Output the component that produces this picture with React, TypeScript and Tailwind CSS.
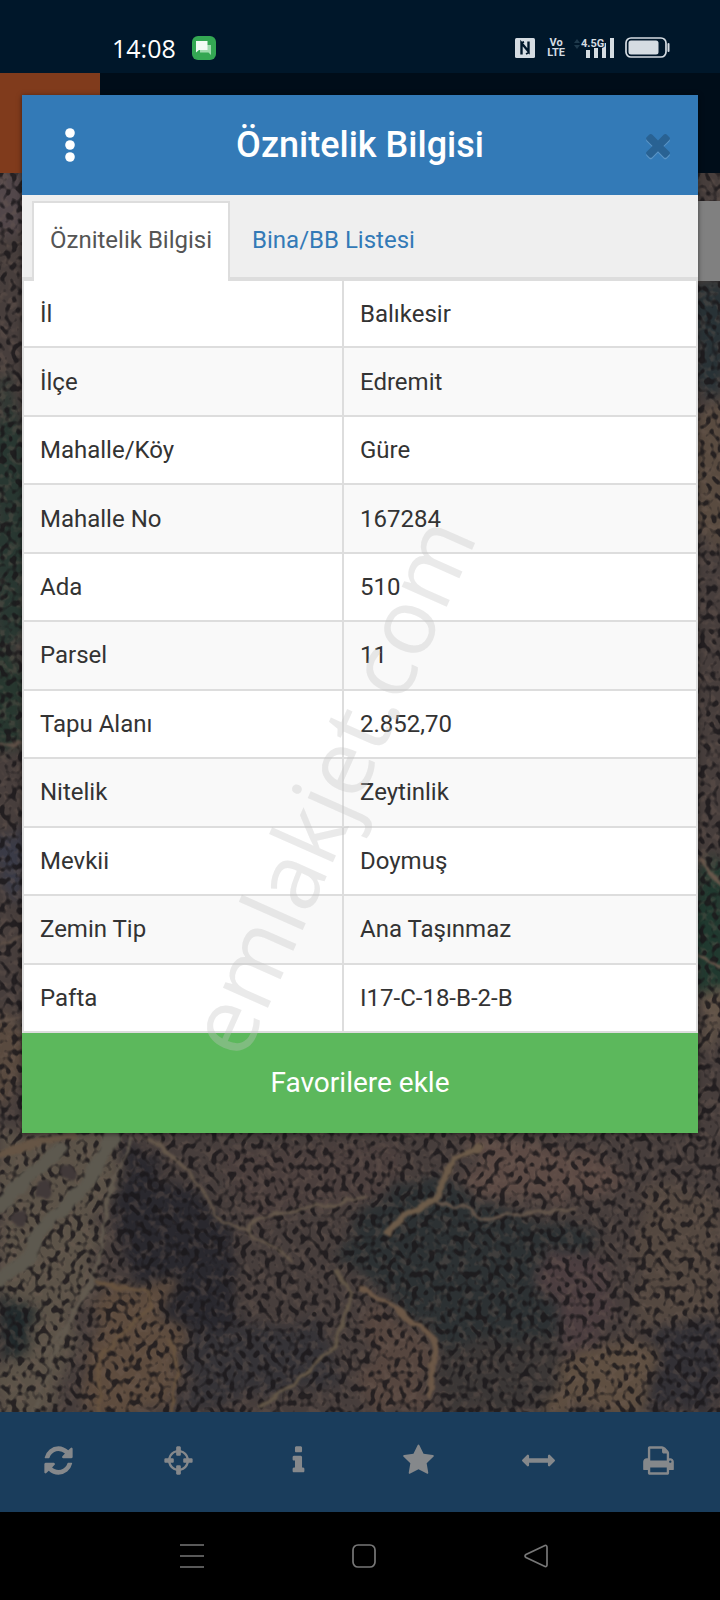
import type { ReactNode } from 'react';

const ROWS = [
  { label: 'İl', value: 'Balıkesir' },
  { label: 'İlçe', value: 'Edremit' },
  { label: 'Mahalle/Köy', value: 'Güre' },
  { label: 'Mahalle No', value: '167284' },
  { label: 'Ada', value: '510' },
  { label: 'Parsel', value: '11' },
  { label: 'Tapu Alanı', value: '2.852,70' },
  { label: 'Nitelik', value: 'Zeytinlik' },
  { label: 'Mevkii', value: 'Doymuş' },
  { label: 'Zemin Tip', value: 'Ana Taşınmaz' },
  { label: 'Pafta', value: 'I17-C-18-B-2-B' },
];

const TOOLS = [
  {
    label: 'Yenile',
    d: 'M1639 1056q0 5-1 7-64 268-268 434.5t-478 166.5q-146 0-282.5-55t-243.5-157l-129 129q-19 19-45 19t-45-19-19-45v-448q0-26 19-45t45-19h448q26 0 45 19t19 45-19 45l-137 137q71 66 161 102t187 36q134 0 250-65t186-179q11-17 53-117 8-23 30-23h192q13 0 22.5 9.5t9.5 22.5zm25-800v448q0 26-19 45t-45 19h-448q-26 0-45-19t-19-45 19-45l138-138q-148-137-349-137-134 0-250 65t-186 179q-11 17-53 117-8 23-30 23h-199q-13 0-22.5-9.5t-9.5-22.5v-7q65-268 270-434.5t480-166.5q146 0 284 55.5t245 156.5l130-129q19-19 45-19t45 19 19 45z',
  },
  {
    label: 'Konum',
    d: 'M1325 1024h-109q-26 0-45-19t-19-45v-128q0-26 19-45t45-19h109q-32-108-112.5-188.5t-188.5-112.5v109q0 26-19 45t-45 19h-128q-26 0-45-19t-19-45v-109q-108 32-188.5 112.5t-112.5 188.5h109q26 0 45 19t19 45v128q0 26-19 45t-45 19h-109q32 108 112.5 188.5t188.5 112.5v-109q0-26 19-45t45-19h128q26 0 45 19t19 45v109q108-32 188.5-112.5t112.5-188.5zm339-192v128q0 26-19 45t-45 19h-143q-37 161-154.5 278.5t-278.5 154.5v143q0 26-19 45t-45 19h-128q-26 0-45-19t-19-45v-143q-161-37-278.5-154.5t-154.5-278.5h-143q-26 0-45-19t-19-45v-128q0-26 19-45t45-19h143q37-161 154.5-278.5t278.5-154.5v-143q0-26 19-45t45-19h128q26 0 45 19t19 45v143q161 37 278.5 154.5t154.5 278.5h143q26 0 45 19t19 45z',
  },
  {
    label: 'Bilgi',
    d: 'M1216 1344v128q0 26-19 45t-45 19h-512q-26 0-45-19t-19-45v-128q0-26 19-45t45-19h64v-384h-64q-26 0-45-19t-19-45v-128q0-26 19-45t45-19h384q26 0 45 19t19 45v576h64q26 0 45 19t19 45zm-128-1152v192q0 26-19 45t-45 19h-256q-26 0-45-19t-19-45v-192q0-26 19-45t45-19h256q26 0 45 19t19 45z',
  },
  {
    label: 'Favoriler',
    d: 'M1728 647q0 22-26 48l-363 354 86 500q1 7 1 20 0 21-10.5 35.5t-30.5 14.5q-19 0-40-12l-449-236-449 236q-22 12-40 12-21 0-31.5-14.5t-10.5-35.5q0-6 2-20l86-500-364-354q-25-27-25-48 0-37 56-46l502-73 225-455q19-41 49-41t49 41l225 455 502 73q56 9 56 46z',
  },
  {
    label: 'Ölçüm',
    d: 'M1792 896q0 26-19 45l-256 256q-19 19-45 19t-45-19-19-45v-128h-1024v128q0 26-19 45t-45 19-45-19l-256-256q-19-19-19-45t19-45l256-256q19-19 45-19t45 19 19 45v128h1024v-128q0-26 19-45t45-19 45 19l256 256q19 19 19 45z',
  },
  {
    label: 'Yazdır',
    d: 'M448 1536h896v-256h-896v256zm0-640h896v-384h-160q-40 0-68-28t-28-68v-160h-640v640zm1152 64q0-26-19-45t-45-19-45 19-19 45 19 45 45 19 45-19 19-45zm128 0v416q0 13-9.5 22.5t-22.5 9.5h-224v160q0 40-28 68t-68 28h-960q-40 0-68-28t-28-68v-160h-224q-13 0-22.5-9.5t-9.5-22.5v-416q0-79 56.5-135.5t135.5-56.5h64v-544q0-40 28-68t68-28h672q40 0 88 20t76 48l152 152q28 28 48 76t20 88v256h64q79 0 135.5 56.5t56.5 135.5z',
  },
];

function StatusBar() {
  return (
    <div className="flex h-[73px] items-center justify-between bg-[#00172a] pl-[112px] pr-[50px] pt-[22px]">
      <div className="flex items-center gap-4">
        <span className="font-['Open_Sans','Noto_Sans',sans-serif] text-[25px] leading-7 font-medium text-white">14:08</span>
        <svg width="24" height="24" viewBox="0 0 24 24">
          <rect width="24" height="24" rx="6" fill="#34a853" />
          <path d="M8 9h11v10l-2.500-2.500H8z" fill="#9fdcaf" />
          <path d="M4 5h11.500v9H7l-3 2.500z" fill="#f2fbf4" />
        </svg>
      </div>
      <div className="flex items-center">
        <svg width="20" height="20" viewBox="0 0 20 20" className="mr-3">
          <rect width="20" height="20" rx="1.500" fill="#d5dce2" />
          <path d="M6.500 20V5l7 8.500V0" fill="none" stroke="#00172a" strokeWidth="2.400" />
          <path d="M6 16.500v3.500M14 0v3.500" stroke="#d5dce2" strokeWidth="4" />
          <path d="M6 5L9 3.800M14 14.500L11 16" stroke="#00172a" strokeWidth="1.800" />
        </svg>
        <div className="mr-2 flex flex-col items-center font-['Roboto',sans-serif] text-[11px] leading-[10px] font-bold text-[#d5dce2]">
          <span>Vo</span>
          <span>LTE</span>
        </div>
        <svg width="42" height="24" viewBox="0 0 42 24" className="mr-2.5">
          <path d="M1 7l3-4 3 4zM1 9l3 4 3-4z" fill="#1f3a4c" />
          <g fill="#d5dce2">
            <rect x="13" y="14" width="4" height="8" />
            <rect x="21" y="12" width="4" height="10" />
            <rect x="29" y="7" width="4" height="15" />
            <rect x="37" y="2" width="4" height="20" />
          </g>
          <text x="8" y="11" fontSize="11" fontWeight="700" fontFamily="Roboto, sans-serif" fill="#d5dce2" stroke="#00172a" strokeWidth="2" paintOrder="stroke">4.5G</text>
        </svg>
        <svg width="45" height="21" viewBox="0 0 45 21">
          <rect x="1" y="1" width="40" height="19" rx="5" fill="none" stroke="#d5dce2" strokeWidth="1.700" />
          <rect x="3.500" y="3.500" width="30" height="14" rx="2.500" fill="#d5dce2" />
          <path d="M43.500 7v7" stroke="#d5dce2" strokeWidth="2" strokeLinecap="round" />
        </svg>
      </div>
    </div>
  );
}

function SatelliteMap() {
  return (
    <svg className="absolute inset-0 h-full w-full" viewBox="0 173 720 1239" preserveAspectRatio="xMidYMid slice" aria-hidden="true">
      <defs>
        <filter id="trees" x="0" y="0" width="100%" height="100%" colorInterpolationFilters="sRGB">
          <feTurbulence type="fractalNoise" baseFrequency="0.17 0.14" numOctaves="1" seed="7" />
          <feColorMatrix values="0 0 0 0 0.1  0 0 0 0 0.09  0 0 0 0 0.1  7 0 0 0 -3.5" />
          <feGaussianBlur stdDeviation="0.5" />
        </filter>
        <filter id="soil" x="0" y="0" width="100%" height="100%" colorInterpolationFilters="sRGB">
          <feTurbulence type="fractalNoise" baseFrequency="0.12" numOctaves="2" seed="21" />
          <feColorMatrix values="0 0 0 0 0.44  0 0 0 0 0.37  0 0 0 0 0.33  5 0 0 0 -2.5" />
        </filter>
        <filter id="soft" x="-20%" y="-20%" width="140%" height="140%" colorInterpolationFilters="sRGB">
          <feTurbulence type="fractalNoise" baseFrequency="0.03" numOctaves="2" seed="5" result="n" />
          <feDisplacementMap in="SourceGraphic" in2="n" scale="40" xChannelSelector="R" yChannelSelector="G" />
          <feGaussianBlur stdDeviation="6" />
        </filter>
        <filter id="rough" x="-5%" y="-5%" width="110%" height="110%" colorInterpolationFilters="sRGB">
          <feTurbulence type="fractalNoise" baseFrequency="0.07" numOctaves="2" seed="3" result="n" />
          <feDisplacementMap in="SourceGraphic" in2="n" scale="9" xChannelSelector="R" yChannelSelector="G" />
          <feGaussianBlur stdDeviation="1" />
        </filter>
      </defs>
      <rect y="173" width="720" height="1239" fill="#473e3c" />
      <g filter="url(#soft)">
        {/* side strips */}
        <ellipse cx="6" cy="200" rx="26" ry="35" fill="#52474a" />
        <ellipse cx="10" cy="520" rx="22" ry="140" fill="#283731" />
        <ellipse cx="5" cy="700" rx="20" ry="60" fill="#27372f" />
        <ellipse cx="14" cy="860" rx="14" ry="40" fill="#3a3b47" />
        <ellipse cx="8" cy="1060" rx="22" ry="50" fill="#594a3f" />
        <ellipse cx="712" cy="330" rx="20" ry="60" fill="#283236" />
        <ellipse cx="712" cy="470" rx="22" ry="80" fill="#594b40" />
        <ellipse cx="712" cy="930" rx="20" ry="70" fill="#20392f" />
        <ellipse cx="714" cy="1010" rx="16" ry="30" fill="#635548" />
        {/* fields below the dialog */}
        <path d="M0 1132H125L108 1200L80 1320L50 1412H0z" fill="#5c5348" />
        <path d="M130 1145L190 1185L240 1240L230 1330L180 1340L110 1240z" fill="#29282e" />
        <path d="M210 1150H400V1195L260 1225z" fill="#4b3f3d" />
        <path d="M380 1200L440 1175L500 1210L600 1225L560 1340L440 1340L340 1260z" fill="#2c3133" />
        <path d="M470 1140L590 1145L630 1190L560 1200L470 1190z" fill="#5d4b45" />
        <path d="M100 1290L165 1290L180 1340L175 1412H85z" fill="#5e4c3e" />
        <path d="M185 1330L320 1320L340 1380L190 1412z" fill="#353337" />
        <path d="M440 1340L560 1340L555 1412H440z" fill="#3b3736" />
        <path d="M365 1300L430 1345V1412H365z" fill="#56463f" />
        <path d="M540 1250L610 1260L600 1350L560 1355z" fill="#4c3e40" />
        <path d="M640 1190H720V1320H635z" fill="#544840" />
        <path d="M555 1360L650 1345V1412H555z" fill="#5f4f41" />
        <path d="M650 1320H720V1412H650z" fill="#323035" />
        <path d="M0 1290L30 1300L25 1350H0z" fill="#20292b" />
      </g>
      <rect y="173" width="720" height="1239" filter="url(#soil)" opacity="0.3" />
      <rect y="173" width="720" height="1239" filter="url(#trees)" opacity="0.8" />
      <g filter="url(#rough)" fill="none" strokeLinecap="round" strokeLinejoin="round">
        <path d="M112 1138L84 1188L38 1232L30 1255L0 1280M60 1150L18 1186L0 1205" stroke="#5d594f" strokeWidth="14" />
        <path d="M132 1137L108 1196L98 1265L60 1340L33 1412M95 1280L45 1355" stroke="#625a4f" strokeWidth="3" />
        <path d="M150 1138L190 1172L215 1215L248 1232L292 1260M248 1230L262 1217L365 1197" stroke="#65584b" strokeWidth="3" />
        <path d="M480 1145L454 1160L436 1198L405 1215L388 1232" stroke="#6c5b49" strokeWidth="7" />
        <path d="M436 1203L465 1207L482 1218L575 1209" stroke="#64564b" strokeWidth="3" />
        <path d="M338 1270L350 1294L338 1342L290 1388L260 1408" stroke="#635748" strokeWidth="4" />
        <path d="M360 1288L395 1308L435 1340L430 1395" stroke="#6c5847" strokeWidth="6" />
        <path d="M98 1283L148 1292L150 1307L130 1328M125 1330L98 1360L100 1412M170 1340L178 1370L172 1412" stroke="#67533f" strokeWidth="4" />
        <path d="M0 1155L40 1140L72 1135" stroke="#665545" strokeWidth="8" />
        <path d="M0 744H22M0 945L22 935M0 1022L22 1016" stroke="#625349" strokeWidth="3" />
        <path d="M698 955L722 965M700 860L720 885" stroke="#6a594d" strokeWidth="3" />
      </g>
      <g fill="#413939" filter="url(#rough)">
        <circle cx="68" cy="1172" r="8" />
        <circle cx="45" cy="1190" r="8" />
        <circle cx="20" cy="1219" r="8" />
      </g>
    </svg>
  );
}

function NavButton({ label, children }: { label: string; children: ReactNode }) {
  return (
    <button type="button" aria-label={label} className="flex h-11 w-11 items-center justify-center">
      <svg width="26" height="26" viewBox="0 0 26 26" fill="none" stroke="#777777" strokeWidth="1.700">
        {children}
      </svg>
    </button>
  );
}

function ParcelDialog() {
  return (
    <div
      role="dialog"
      aria-labelledby="dialog-title"
      className="absolute inset-x-[22px] top-[95px] overflow-hidden bg-white shadow-[0_1px_5px_rgba(0,0,0,0.5)]"
    >
      <div className="flex h-[100px] items-center justify-between bg-[#337ab7] px-4">
        <button type="button" aria-label="Menü" className="flex h-12 w-16 items-center justify-center">
          <svg width="12" height="36" viewBox="0 0 12 36" fill="#fff">
            <circle cx="6" cy="6" r="4.800" />
            <circle cx="6" cy="18" r="4.800" />
            <circle cx="6" cy="30" r="4.800" />
          </svg>
        </button>
        <h1 id="dialog-title" className="text-[36px] leading-[44px] font-medium text-white">Öznitelik Bilgisi</h1>
        <button type="button" aria-label="Kapat" className="flex h-12 w-16 items-center justify-end pr-1.5">
          <svg width="36" height="36" viewBox="0 0 1792 1792" className="shrink-0">
            <path
              d="M1490 1372q0 40-28 68l-136 136q-28 28-68 28t-68-28l-294-294-294 294q-28 28-68 28t-68-28l-136-136q-28-28-28-68t28-68l294-294-294-294q-28-28-28-68t28-68l136-136q28-28 68-28t68 28l294 294 294-294q28-28 68-28t68 28l136 136q28 28 28 68t-28 68l-294 294 294 294q28 28 28 68z"
              fill="#5b95c6"
            />
            <path
              d="M1490 1302q0 40-28 68l-136 136q-28 28-68 28t-68-28l-294-294-294 294q-28 28-68 28t-68-28l-136-136q-28-28-28-68t28-68l294-294-294-294q-28-28-28-68t28-68l136-136q28-28 68-28t68 28l294 294 294-294q28-28 68-28t68 28l136 136q28 28 28 68t-28 68l-294 294 294 294q28 28 28 68z"
              fill="#296293"
            />
          </svg>
        </button>
      </div>

      <div role="tablist" className="flex h-[86px] items-end border-b-4 border-[#dddddd] bg-[#efefef] pl-[10px] text-[24px] leading-8">
        <button type="button" role="tab" aria-selected="true" className="-mb-1 h-20 border-2 border-b-0 border-[#dddddd] bg-white px-4 pb-1 text-[#555555]">
          Öznitelik Bilgisi
        </button>
        <button type="button" role="tab" aria-selected="false" className="h-[74px] px-[22px] text-[#337ab7]">
          Bina/BB Listesi
        </button>
      </div>

      <table className="h-[752px] w-full border-collapse text-[24px] leading-8 text-[#333333]">
        <tbody>
          {ROWS.map((row, idx) => (
            <tr key={row.label} className={idx % 2 ? 'bg-[#f9f9f9]' : 'bg-white'}>
              <th scope="row" className="w-[320px] border-2 border-t-0 border-[#dddddd] px-4 text-left font-normal">{row.label}</th>
              <td className="border-2 border-t-0 border-[#dddddd] px-4">{row.value}</td>
            </tr>
          ))}
        </tbody>
      </table>

      <button type="button" className="block h-[100px] w-full bg-[#5cb85c] text-[28px] leading-9 text-white">Favorilere ekle</button>

      {/* watermark across the table */}
      <span className="pointer-events-none absolute top-[690px] left-[307px] -translate-x-1/2 -translate-y-1/2 rotate-[-66deg] font-['Open_Sans',sans-serif] text-[92px] leading-none text-[#c4c4c4]/35">
        emlakjet.com
      </span>
    </div>
  );
}

export default function App() {
  return (
    <div className="relative flex min-h-screen flex-col overflow-hidden bg-black font-['Roboto',sans-serif]">
      <StatusBar />
      <header className="h-[100px] bg-[#000d19]">
        <div className="h-full w-[100px] bg-[#803b1c]" />
      </header>
      <main className="relative flex-1">
        <SatelliteMap />
        <div className="absolute top-7 right-0 h-20 w-12 bg-[#808080]" />
      </main>
      <nav className="grid h-[100px] grid-cols-6 bg-[#1a3d5c]">
        {TOOLS.map(tool => (
          <button key={tool.label} type="button" aria-label={tool.label} className="flex items-center justify-center pr-1 pb-1">
            <svg width="33" height="33" viewBox="0 0 1792 1792" fill="#85888b">
              <path d={tool.d} />
            </svg>
          </button>
        ))}
      </nav>
      <div className="flex h-[88px] items-center justify-center gap-32 bg-black pl-2">
        <NavButton label="Son uygulamalar">
          <path d="M1 2h24M1 13h24M1 24h24" />
        </NavButton>
        <NavButton label="Ana ekran">
          <rect x="2" y="2" width="22" height="22" rx="5" />
        </NavButton>
        <NavButton label="Geri">
          <path d="M22 2.500L3 11.500q-2 1.500 0 3L22 23.500q2 .5 2-2V4.500q0-2.500-2-2z" />
        </NavButton>
      </div>
      <ParcelDialog />
    </div>
  );
}
